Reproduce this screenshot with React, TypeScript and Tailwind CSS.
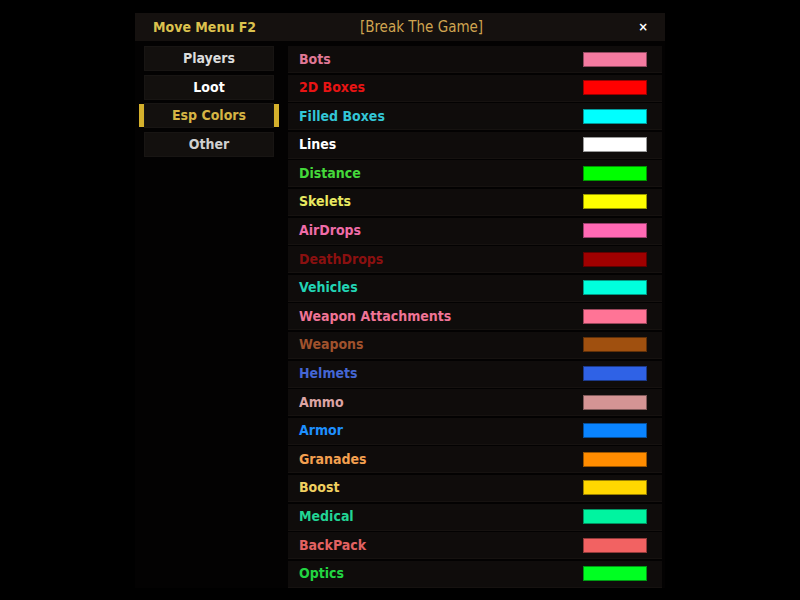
const NAV = [
  { label: "Players", text: "text-[#dcdcdc]" },
  { label: "Loot", text: "text-white" },
  { label: "Esp Colors", text: "text-[#d6b444]", active: true },
  { label: "Other", text: "text-[#d0d0d0]" },
];

const ROWS = [
  { name: "Bots", text: "#e07896", swatch: "#f47aa0" },
  { name: "2D Boxes", text: "#e81414", swatch: "#ff0000" },
  { name: "Filled Boxes", text: "#33c6d6", swatch: "#00ffff" },
  { name: "Lines", text: "#ffffff", swatch: "#ffffff" },
  { name: "Distance", text: "#44d83a", swatch: "#00ff00" },
  { name: "Skelets", text: "#e8e860", swatch: "#ffff00" },
  { name: "AirDrops", text: "#f06ca8", swatch: "#ff69b4" },
  { name: "DeathDrops", text: "#8a1010", swatch: "#a00000" },
  { name: "Vehicles", text: "#22d4b4", swatch: "#00ffdd" },
  { name: "Weapon Attachments", text: "#f07496", swatch: "#ff7496" },
  { name: "Weapons", text: "#a0522d", swatch: "#a0500f" },
  { name: "Helmets", text: "#4466d4", swatch: "#2f62e6" },
  { name: "Ammo", text: "#dca4a4", swatch: "#d49494" },
  { name: "Armor", text: "#1e90ff", swatch: "#0a84ff" },
  { name: "Granades", text: "#f4a050", swatch: "#ff8c00" },
  { name: "Boost", text: "#f0d060", swatch: "#ffd700" },
  { name: "Medical", text: "#22d494", swatch: "#00f4a0" },
  { name: "BackPack", text: "#e26262", swatch: "#f26262" },
  { name: "Optics", text: "#22d442", swatch: "#00ff22" },
];

export default function App() {
  return (
    <div
      className="w-[800px] h-[600px] bg-black overflow-hidden pt-[13px] pl-[135px]"
      style={{ fontFamily: '"DejaVu Sans Condensed", "DejaVu Sans", sans-serif' }}
    >
      <div className="w-[530px] flex flex-col">
        {/* Title bar */}
        <div className="h-[28px] bg-[#15110f] flex items-center pl-[18px] pr-[17px] text-[14px] font-bold relative">
          <span className="text-[#dcc24e]">Move Menu F2</span>
          <span className="absolute left-0 right-0 text-center text-[#cfa450] font-normal text-[15px] pointer-events-none pl-[43px]">
            [Break The Game]
          </span>
          <span className="ml-auto text-white text-[13px]">×</span>
        </div>

        {/* Body */}
        <div className="flex pt-[5px] bg-[#030202] h-[547px]">
          <div className="w-[153px] flex flex-col gap-[3.6px] pl-[4px]">
            {NAV.map((n) => (
              <div key={n.label} className="h-[25px] flex items-stretch">
                <div className={n.active ? "w-[5px] bg-[#d4b02c] my-[1px]" : "w-[5px]"} />
                <div
                  className={`w-[130px] bg-[#13100e] border border-[#181513] flex items-center justify-center text-[14px] font-bold ${n.text}`}
                >
                  {n.label}
                </div>
                <div className={n.active ? "w-[5px] bg-[#d4b02c] my-[1px]" : "w-[5px]"} />
              </div>
            ))}
          </div>

          <div className="w-[374px] flex flex-col gap-[1.6px]">
            {ROWS.map((r) => (
              <div
                key={r.name}
                className="h-[27px] bg-[#0f0c0b] border-b border-[#161210] flex items-center pl-[11px] pr-[15px]"
              >
                <span className="text-[14px] font-bold" style={{ color: r.text }}>
                  {r.name}
                </span>
                <span
                  className="ml-auto w-[64px] h-[15px] border border-black/40"
                  style={{ backgroundColor: r.swatch }}
                />
              </div>
            ))}
          </div>
        </div>
      </div>
    </div>
  );
}
